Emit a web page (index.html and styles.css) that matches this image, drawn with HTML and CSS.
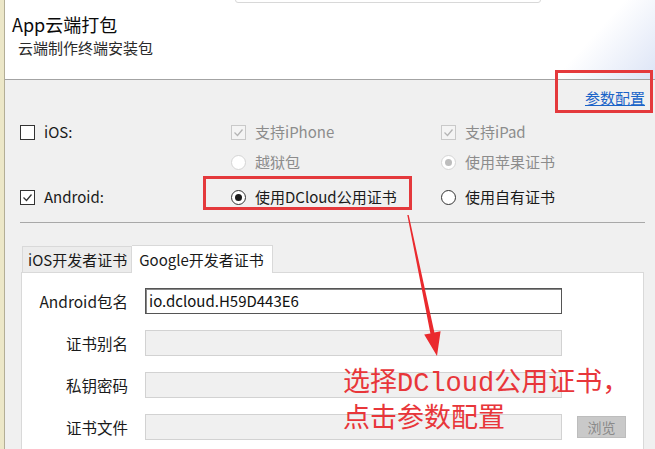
FILE: index.html
```html
<!DOCTYPE html>
<html lang="zh-CN">
<head>
    <meta charset="UTF-8">
    <meta name="viewport" content="width=device-width, initial-scale=1.0">
    <title>App云端打包</title>
    <link rel="stylesheet" href="styles.css">
</head>
<body>
    <div class="screen">
        <div class="backdrop-edge"></div>
        <div class="dialog">
            <header class="dialog-head">
                <div class="head-box"></div>
                <h1>App云端打包</h1>
                <p class="subtitle">云端制作终端安装包</p>
            </header>

            <main class="dialog-body">
                <div class="link-row">
                    <a href="#" class="config-link">参数配置</a>
                </div>

                <div class="platforms">
                    <label class="opt"><span class="check"></span>iOS:</label>
                    <label class="opt disabled"><span class="check on"><svg viewBox="0 0 13 13"><polyline points="2.5,6.5 5.5,9.5 10.5,3.5"/></svg></span>支持iPhone</label>
                    <label class="opt disabled"><span class="check on"><svg viewBox="0 0 13 13"><polyline points="2.5,6.5 5.5,9.5 10.5,3.5"/></svg></span>支持iPad</label>

                    <span></span>
                    <label class="opt disabled"><span class="radio"></span>越狱包</label>
                    <label class="opt disabled"><span class="radio on"></span>使用苹果证书</label>

                    <label class="opt"><span class="check on"><svg viewBox="0 0 13 13"><polyline points="2.5,6.5 5.5,9.5 10.5,3.5"/></svg></span>Android:</label>
                    <label class="opt"><span class="radio on"></span>使用DCloud公用证书</label>
                    <label class="opt"><span class="radio"></span>使用自有证书</label>
                </div>

                <hr class="sep">

                <div class="tabs">
                    <div class="tab">iOS开发者证书</div>
                    <div class="tab active">Google开发者证书</div>
                </div>
                <div class="tab-panel">
                    <div class="field-grid">
                        <label>Android包名</label>
                        <div class="input">io.dcloud.H59D443E6</div>
                        <span></span>

                        <label>证书别名</label>
                        <div class="input disabled"></div>
                        <span></span>

                        <label>私钥密码</label>
                        <div class="input disabled"></div>
                        <span></span>

                        <label>证书文件</label>
                        <div class="input disabled"></div>
                        <button class="browse-btn" disabled>浏览</button>
                    </div>
                </div>
            </main>
        </div>

        <!-- annotations drawn over the screenshot -->
        <div class="mark mark-config"></div>
        <div class="mark mark-dcloud"></div>
        <svg class="arrow" viewBox="0 0 655 449">
            <polygon points="407.3,215 408.7,215 434.4,332.6 440.6,331.3 437,356 424.2,334.6 430.4,333.4"/>
        </svg>
        <div class="note">选择DCloud公用证书，<br>点击参数配置</div>
    </div>
</body>
</html>
```

FILE: styles.css
```css
body {
    margin: 0;
    font-family: "Noto Sans CJK SC", sans-serif;
    color: #1e1e1e;
    background-color: #f0f0f0;
}
.screen {
    position: relative;
    display: flex;
    width: 655px;
    height: 449px;
    overflow: hidden;
}
.backdrop-edge {
    flex-shrink: 0;
    width: 4px;
    background-color: #ece7c8;
    border-right: 1px solid #b3ae96;
}
.dialog {
    flex: 1;
    display: flex;
    flex-direction: column;
    min-height: 0;
}
.dialog-head {
    flex-shrink: 0;
    position: relative;
    height: 79px;
    border-bottom: 1px solid #a3a3a3;
    background: linear-gradient(132deg, #fff 86%, #dce4f6 100%);
}
.head-box {
    position: absolute;
    left: 230px;
    top: -5px;
    width: 304px;
    height: 6px;
    border: 1px solid #d8d8d8;
    border-radius: 3px;
    background-color: #fff;
}
h1 {
    margin: 0;
    padding: 12px 0 0 7px;
    font-size: 18px;
    font-weight: 400;
    line-height: 24px;
    color: #0a0a0a;
}
.subtitle {
    margin: 2px 0 0 13px;
    font-size: 15px;
    line-height: 20px;
    color: #2a2a2a;
}
.dialog-body {
    flex: 1 0 auto;
    padding: 0 0 0 15px;
}
.link-row {
    display: flex;
    justify-content: flex-end;
    padding: 8px 10px 0 0;
    line-height: 20px;
}
.config-link {
    font-size: 15px;
    color: #1a64c8;
    text-decoration: underline;
}
.platforms {
    display: grid;
    grid-template-columns: 211px 210px 1fr;
    grid-template-rows: 30px 30px 40px;
    align-items: center;
    margin-top: 9px;
}
.opt {
    display: flex;
    align-items: center;
    gap: 9px;
    font-size: 15px;
    line-height: 20px;
    color: #1a1a1a;
}
.opt.disabled {
    color: #8c8c8c;
}
.check {
    width: 13px;
    height: 13px;
    border: 1px solid #333;
    background-color: #fff;
    display: flex;
}
.check svg {
    width: 13px;
    height: 13px;
    fill: none;
    stroke: #333;
    stroke-width: 1.3;
}
.opt.disabled .check {
    border-color: #c9c9c9;
    background-color: #f4f4f4;
}
.opt.disabled .check svg {
    stroke: #b5b5b5;
}
.radio {
    position: relative;
    width: 13px;
    height: 13px;
    border: 1px solid #333;
    border-radius: 50%;
    background-color: #fff;
}
.radio.on::after {
    content: "";
    position: absolute;
    left: 3px;
    top: 3px;
    width: 7px;
    height: 7px;
    border-radius: 50%;
    background-color: #1a1a1a;
}
.opt.disabled .radio {
    border-color: #d4d4d4;
}
.opt.disabled .radio.on::after {
    background-color: #bdbdbd;
}
.sep {
    margin: 5px 10px 0 0;
    border: none;
    border-top: 1px solid #a8a8a8;
}
.tabs {
    display: flex;
    align-items: flex-end;
    margin: 21px 0 0 2px;
}
.tab {
    height: 25px;
    padding: 0 4px 0 5px;
    font-size: 15px;
    line-height: 25px;
    color: #1a1a1a;
    background-color: #ececec;
    border: 1px solid #d9d9d9;
    border-bottom: none;
}
.tab.active {
    height: 27px;
    padding: 0 8px 0 7px;
    line-height: 27px;
    background-color: #fff;
    border-left: none;
    position: relative;
    top: 1px;
}
.tab-panel {
    margin: 0 11px 0 1px;
    height: 200px;
    background-color: #fff;
    border: 1px solid #d9d9d9;
}
.field-grid {
    display: grid;
    grid-template-columns: 108px 417px 49px;
    grid-auto-rows: 26px;
    column-gap: 15px;
    row-gap: 16px;
    align-items: center;
    padding-top: 15px;
}
.field-grid label {
    padding-right: 2px;
    text-align: right;
    font-size: 15.5px;
    line-height: 20px;
    color: #1a1a1a;
}
.input {
    box-sizing: border-box;
    height: 26px;
    padding: 0 3px;
    font-size: 15px;
    line-height: 23px;
    color: #111;
    background-color: #fff;
    border: 1px solid #555;
    box-shadow: inset 1px 1px 0 #888;
}
.input.disabled {
    background-color: #f0f0f0;
    border-color: #d2d2d2;
    box-shadow: none;
}
.browse-btn {
    height: 22px;
    padding: 0;
    font-family: inherit;
    font-size: 14px;
    color: #8a8a8a;
    background-color: #c9c9c9;
    border: 1px solid #bdbdbd;
}
.mark {
    position: absolute;
    border: 3px solid #e4393c;
    box-sizing: border-box;
}
.mark-config {
    left: 555px;
    top: 70px;
    width: 98px;
    height: 43px;
}
.mark-dcloud {
    left: 203px;
    top: 176px;
    width: 209px;
    height: 34px;
}
.arrow {
    position: absolute;
    left: 0;
    top: 0;
    width: 655px;
    height: 449px;
    fill: #ea2a2e;
}
.note {
    position: absolute;
    left: 343px;
    top: 366px;
    font-family: "Liberation Mono", "Noto Sans CJK SC", monospace;
    font-size: 27px;
    line-height: 36px;
    color: #e8363a;
}
```
